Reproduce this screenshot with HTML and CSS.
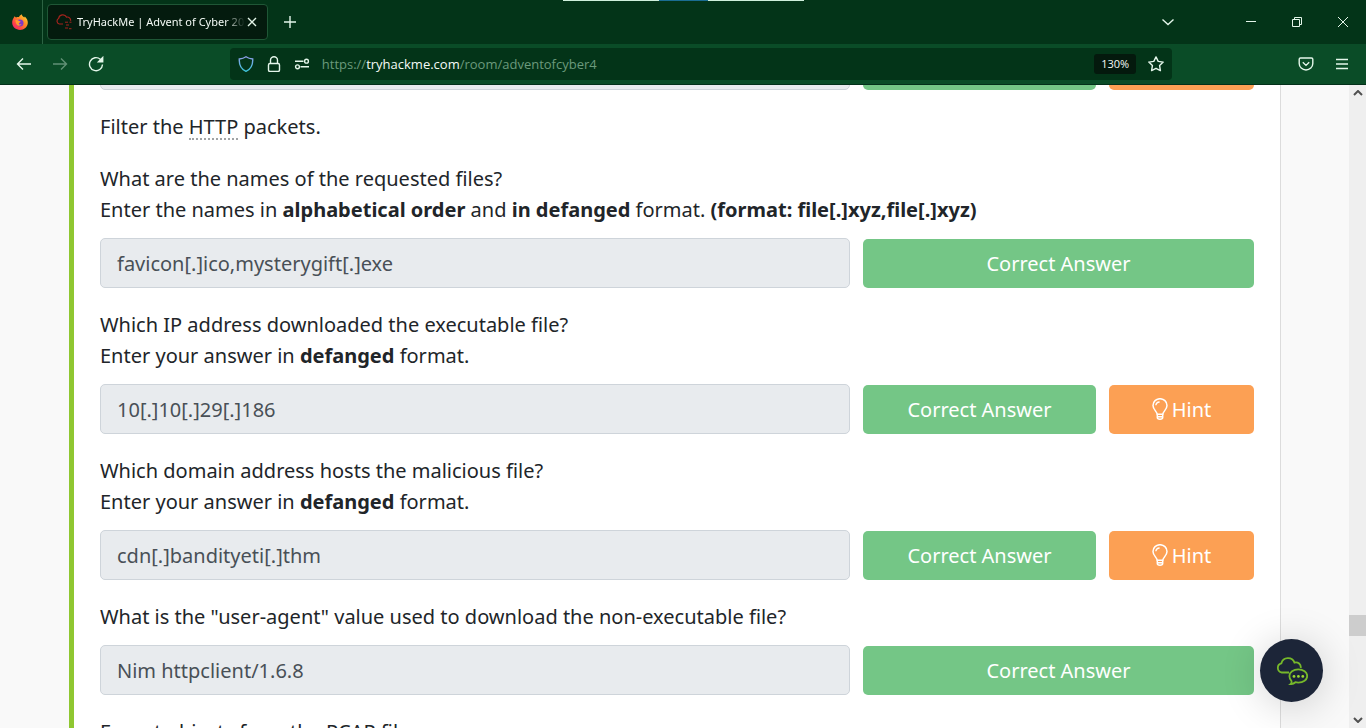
FILE: index.html
```html
<!DOCTYPE html>
<html lang="en">
<head>
<meta charset="utf-8">
<title>TryHackMe | Advent of Cyber 2022</title>
<link rel="stylesheet" href="styles.css">
</head>
<body>
<svg class="defs" aria-hidden="true">
  <symbol id="bulb" viewBox="0 0 16 22">
    <path d="M5.2 16.3C5 13.6 1 11.5 1 7.4a7 6.7 0 0 1 14 0c0 4.1-4 6.200-4.200 8.900z"/>
    <path d="M3.900 7.300C4 5.400 5.600 4 7.600 3.900M5.300 16.300v3.200c0 1 1 1.700 2.700 1.700s2.700-.7 2.700-1.700v-3.200M5.300 18.700h5.400"/>
  </symbol>
</svg>
<header class="browser">
  <div class="tabbar">
    <span class="loadbar"></span>
    <div class="pinned">
      <svg class="icon16" viewBox="0 0 16 16">
        <defs>
          <linearGradient id="fox" x1="1" y1="0" x2="0" y2="1"><stop offset="0" stop-color="#ffe83d"/><stop offset=".4" stop-color="#ff8a25"/><stop offset=".75" stop-color="#ff3a4c"/><stop offset="1" stop-color="#d8208c"/></linearGradient>
        </defs>
        <path fill="url(#fox)" d="M1.600 4 2.500 2.200 4 3.600C5 3.100 6 3 7 3.100 7.300 2 8.300 1 9.800.2c0 1.500 1.200 2.300 2.500 3.400l.5-1.200C14.800 4.300 16 6.300 15.800 9c-.3 4-3.700 6.900-7.800 6.900S.4 12.900.2 9C.1 7 .700 5.400 1.600 4z"/>
        <circle cx="7.900" cy="9" r="3.600" fill="#8038c8"/>
        <path fill="#ff9a2e" d="M3.300 6.300c1.500-.6 3-.2 3.900.800l1.500.3c-.2 1-1.700 1.100-1.900 2-.1 1 1.400 1.600 2.700.7-1 2.200-4 2.300-5.100.2-.6-1.200-.9-2.600-1.100-4z"/>
      </svg>
    </div>
    <div class="tab">
      <svg class="favicon" viewBox="0 0 18 16" fill="none" stroke="#a3231d" stroke-width="1.200">
        <path d="M8 10H4.200A3 3 0 0 1 3.600 4.500 4.300 4.300 0 0 1 11.600 3.100a3.300 3.300 0 0 1 4 3.600"/>
        <path stroke-dasharray="3 1.500" stroke-width="1" d="M10 8.200h6.500M11 11h4M10 14h3M14 14.700h2.500"/>
      </svg>
      <span class="tab-title">TryHackMe | Advent of Cyber 2022</span>
      <button class="tab-close" aria-label="Close tab"><svg viewBox="0 0 10 10" class="line"><path d="m1 1 8 8M9 1 1 9"/></svg></button>
    </div>
    <button class="plain" aria-label="New tab"><svg class="icon12 line" viewBox="0 0 12 12"><path d="M6 0v12M0 6h12"/></svg></button>
    <button class="plain alltabs" aria-label="List all tabs"><svg class="icon12 line" viewBox="0 0 12 12"><path d="m.5 3.500 5.500 5 5.500-5"/></svg></button>
    <div class="window-controls">
      <button class="plain" aria-label="Minimize"><svg class="icon10" viewBox="0 0 10 10"><path class="hair" d="M0 4.500h10"/></svg></button>
      <button class="plain" aria-label="Restore"><svg class="icon10" viewBox="0 0 10 10"><path class="hair" d="M.5 2.500h7v7h-7zM2.500 2.500v-2h7v7h-2"/></svg></button>
      <button class="plain" aria-label="Close"><svg class="icon10" viewBox="0 0 10 10"><path class="hair" d="m0 0 10 10M10 0 0 10"/></svg></button>
    </div>
  </div>
  <div class="navbar">
    <button class="plain" aria-label="Back"><svg class="icon16 line" viewBox="0 0 16 16"><path d="M15 8H1.500M7 2.500 1.500 8 7 13.500"/></svg></button>
    <button class="plain dim" aria-label="Forward" disabled><svg class="icon16 line" viewBox="0 0 16 16"><path d="M1 8h13.500M9 2.500 14.500 8 9 13.500"/></svg></button>
    <button class="plain" aria-label="Reload"><svg class="icon16 line" viewBox="0 0 16 16"><path d="M14.500 8.500A6.500 6.500 0 1 1 12.300 3.300L14 5"/><path fill="#e4f6ea" d="M14.700 1.500v4.200h-4.200z"/></svg></button>
    <span class="spring"></span>
    <div class="urlbar">
      <svg class="icon16 shield" viewBox="0 0 16 16"><defs><linearGradient id="sh" x1="0" y1="0" x2="0" y2="1"><stop offset="0" stop-color="#8f9de8"/><stop offset="1" stop-color="#3cc4d8"/></linearGradient></defs><path stroke="url(#sh)" d="M8 .8c2 1.400 4.200 2 6.700 2.200.3 5.300-1 9.700-6.700 12.300C2.300 12.700 1 8.300 1.300 3 3.800 2.800 6 2.200 8 .8z"/></svg>
      <svg class="icon16 line" viewBox="0 0 16 16"><rect x="2.500" y="7.500" width="11" height="8" rx="1.500"/><path d="M4.500 7.500V4.200a3.500 3.500 0 0 1 7 0v3.300"/></svg>
      <svg class="icon16 line" viewBox="0 0 16 16"><path d="M1 5.200h8.500M6.500 10.800H15"/><circle cx="12.500" cy="5.200" r="1.900"/><circle cx="3.500" cy="10.800" r="1.900"/></svg>
      <span class="address">https://<b>tryhackme.com</b>/room/adventofcyber4</span>
      <button class="zoom">130%</button>
      <button class="plain star" aria-label="Bookmark"><svg class="icon16 line" viewBox="0 0 16 16"><path stroke-linejoin="round" d="m8 .9 2.200 4.500 5 .7-3.600 3.500.8 5L8 12.300l-4.400 2.300.8-5L.8 6.100l5-.7z"/></svg></button>
    </div>
    <span class="spring"></span>
    <button class="plain" aria-label="Save to Pocket"><svg class="icon16 line" viewBox="0 0 16 16"><path d="M2.500 2h11c.8 0 1.300.5 1.300 1.300V7.500a6.800 6.500 0 0 1-13.600 0V3.300C1.200 2.500 1.700 2 2.500 2zM4.800 6.300 8 9.400l3.200-3.100"/></svg></button>
    <button class="plain" aria-label="Menu"><svg class="icon12 line" viewBox="0 0 12 12"><path d="M0 1.500h12M0 6h12M0 10.500h12"/></svg></button>
  </div>
</header>

<div class="viewport">
  <main class="page">
    <section class="card">
      <div class="answer first">
        <input type="text" aria-label="Previous answer" readonly>
        <div class="actions with-hint"><button class="btn correct" aria-label="Correct Answer"></button><button class="btn hint" aria-label="Hint"></button></div>
      </div>
      <p>Filter the <abbr title="Hypertext Transfer Protocol">HTTP</abbr> packets.</p>
      <label for="q1">What are the names of the requested files?<br>Enter the names in <strong>alphabetical order</strong> and <strong>in defanged</strong> format. <strong>(format: file[.]xyz,file[.]xyz)</strong></label>
      <div class="answer">
        <input id="q1" type="text" value="favicon[.]ico,mysterygift[.]exe" readonly>
        <div class="actions"><button class="btn correct">Correct Answer</button></div>
      </div>
      <label for="q2">Which IP address downloaded the executable file?<br>Enter your answer in <strong>defanged</strong> format.</label>
      <div class="answer">
        <input id="q2" type="text" value="10[.]10[.]29[.]186" readonly>
        <div class="actions with-hint"><button class="btn correct">Correct Answer</button><button class="btn hint"><svg class="bulb"><use href="#bulb"/></svg>Hint</button></div>
      </div>
      <label for="q3">Which domain address hosts the malicious file?<br>Enter your answer in <strong>defanged</strong> format.</label>
      <div class="answer">
        <input id="q3" type="text" value="cdn[.]bandityeti[.]thm" readonly>
        <div class="actions with-hint"><button class="btn correct">Correct Answer</button><button class="btn hint"><svg class="bulb"><use href="#bulb"/></svg>Hint</button></div>
      </div>
      <label for="q4">What is the "user-agent" value used to download the non-executable file?</label>
      <div class="answer">
        <input id="q4" type="text" value="Nim httpclient/1.6.8" readonly>
        <div class="actions"><button class="btn correct">Correct Answer</button></div>
      </div>
      <p>Export objects from the PCAP file.</p>
    </section>
  </main>
  <div class="scrollbar">
    <svg class="arrow" viewBox="0 0 10 6"><path d="m1 5 4-4 4 4"/></svg>
    <span class="thumb"></span>
    <svg class="arrow" viewBox="0 0 10 6"><path d="m1 1 4 4 4-4"/></svg>
  </div>
  <button class="chat" aria-label="Open chat">
    <svg viewBox="0 0 32 28" fill="none" stroke="#76b82a" stroke-width="1.800">
      <path d="M13 15.500H5.800A4.700 4.700 0 0 1 5.400 6.300 6.900 6.900 0 0 1 18.500 5.600 4.800 4.800 0 0 1 24.700 11"/>
      <path d="M14.500 27.200c1-.8 1.300-2 .9-3.300A7 7 0 0 1 13.400 19c0-3.900 4-6.600 8.900-6.600s8.900 2.700 8.900 6.600-4 6.600-8.900 6.600c-1 0-2-.1-2.900-.4-1.300 1.100-3 1.900-4.900 2z"/>
      <g fill="#9ad82f" stroke="none"><circle cx="18" cy="19.400" r="1.400"/><circle cx="22.400" cy="19.400" r="1.400"/><circle cx="26.800" cy="19.400" r="1.400"/></g>
    </svg>
  </button>
</div>
</body>
</html>
```
FILE: styles.css
```css
* { box-sizing: border-box; }
html, body { height: 100%; margin: 0; }
body {
  display: flex;
  flex-direction: column;
  overflow: hidden;
  background: #f9f9f9;
  color: #212529;
  font-family: "Noto Sans", "Open Sans", sans-serif;
  font-size: 20px;
  line-height: 31px;
}
button { font: inherit; border: 0; padding: 0; }
svg { display: block; flex: none; }
.defs { position: absolute; width: 0; height: 0; }

.browser {
  flex: none;
  background: #0a4c27;
  border-bottom: 1px solid #03301a;
  color: #e4f6ea;
  font-family: "Open Sans", "Noto Sans", sans-serif;
  font-size: 12px;
  line-height: 16px;
}
.line { fill: none; stroke: #e4f6ea; stroke-width: 1.4; }
.hair { fill: none; stroke: #e4f6ea; stroke-width: 1; }
.icon16 { width: 16px; height: 16px; }
.icon12 { width: 12px; height: 12px; }
.icon10 { width: 10px; height: 10px; }
.plain {
  display: flex;
  align-items: center;
  justify-content: center;
  width: 36px;
  height: 36px;
  background: none;
}
.dim { opacity: 0.4; }

.tabbar {
  position: relative;
  display: flex;
  align-items: center;
  height: 44px;
  background: #033418;
}
.loadbar {
  position: absolute;
  top: 0;
  left: 563px;
  width: 241px;
  height: 1px;
  background: linear-gradient(90deg, #cff0dc 40%, #1a6d92 40% 60%, #cff0dc 60%);
}
.pinned {
  display: flex;
  align-items: center;
  justify-content: center;
  width: 43px;
  height: 44px;
  margin-right: 4px;
  padding-right: 2px;
  border-right: 1px solid #2c6343;
}
.tab {
  display: flex;
  align-items: center;
  width: 221px;
  height: 36px;
  margin-right: 4px;
  padding: 0 8px 0 7px;
  background: #041b0e;
  border: 1px solid #1f5736;
  border-radius: 4px;
}
.favicon { width: 18px; height: 16px; margin-right: 4px; }
.tab-title {
  flex: 1;
  overflow: hidden;
  white-space: nowrap;
  color: #f4fbf6;
  font-family: "Noto Sans", "Open Sans", sans-serif;
  font-size: 11px;
  mask-image: linear-gradient(90deg, #000 88%, transparent);
}
.tab-close {
  display: flex;
  align-items: center;
  justify-content: center;
  width: 14px;
  height: 20px;
  background: none;
}
.tab-close svg { width: 10px; height: 10px; }
.alltabs { margin-left: auto; margin-right: 42px; }
.window-controls { display: flex; }
.window-controls .plain { width: 46px; }

.navbar {
  display: flex;
  align-items: center;
  height: 40px;
  padding: 0 6px;
}
.spring { flex: 1; }
.urlbar {
  display: flex;
  flex: 8;
  align-items: center;
  gap: 12px;
  height: 32px;
  padding: 0 8px;
  background: #033418;
  border-radius: 4px;
}
.shield { fill: none; stroke-width: 1.4; }
.address {
  flex: 1;
  color: #6b9a7c;
  font-size: 13px;
  white-space: nowrap;
}
.address b { color: #f4fbf6; font-weight: 400; }
.zoom {
  height: 20px;
  padding: 0 7px;
  background: #04190d;
  border-radius: 3px;
  color: #f4fbf6;
  font-size: 11px;
}
.star { width: 16px; }

.viewport {
  position: relative;
  display: flex;
  flex: 1;
  min-height: 0;
  overflow: hidden;
}
.page {
  flex: 1;
  padding: 0 68px 0 69px;
  overflow: hidden;
}
.card {
  min-height: 100%;
  padding: 0 26px;
  background: #fff;
  border-left: 5px solid #8fc731;
  border-right: 1px solid #dcdcdc;
}
.card p, .card label { display: block; margin: 0 0 21px; }
.card label { margin-bottom: 13px; }
abbr { text-decoration: none; border-bottom: 2px dotted #a0a3a5; display: inline-block; line-height: 22px; }
strong { font-weight: 700; }

.answer {
  display: grid;
  grid-template-columns: 750fr 391fr;
  gap: 13px;
  align-items: center;
  margin-bottom: 21px;
}
.first { margin-top: -45px; }
.answer input {
  width: 100%;
  min-width: 0;
  height: 50px;
  padding: 0 16px;
  background: #e8ebee;
  border: 1px solid #ced4da;
  border-radius: 5px;
  color: #495057;
  font: inherit;
}
.actions { display: grid; gap: 13px; }
.with-hint { grid-template-columns: 233fr 145fr; }
.btn {
  display: flex;
  align-items: center;
  justify-content: center;
  gap: 4px;
  height: 49px;
  border-radius: 5px;
  color: #fff;
}
.correct { background: #74c686; }
.hint { background: #fca054; }
.bulb { width: 16px; height: 22px; fill: none; stroke: #fff; stroke-width: 1.5; }

.scrollbar {
  display: flex;
  flex-direction: column;
  align-items: center;
  width: 17px;
  padding: 5px 0;
  background: #efefef;
}
.arrow { width: 10px; height: 6px; fill: none; stroke: #505050; stroke-width: 2; }
.thumb { width: 100%; height: 21px; margin: auto 0 81px; background: #cdcdcd; }

.chat {
  position: absolute;
  right: 43px;
  bottom: 26px;
  display: flex;
  align-items: center;
  justify-content: center;
  width: 63px;
  height: 63px;
  background: #1c2538;
  border-radius: 50%;
  box-shadow: 0 4px 40px rgba(0, 0, 0, 0.18);
}
.chat svg { width: 32px; height: 28px; }
```
